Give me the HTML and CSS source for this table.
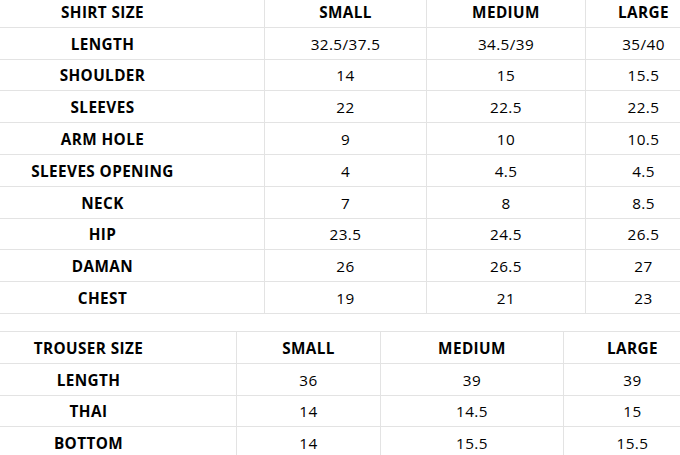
FILE: index.html
```html
<!DOCTYPE html>
<html>
<head>
<meta charset="utf-8">
<link rel="stylesheet" href="styles.css">
</head>
<body>
<div class="wrap">
  <table class="size shirt">
    <colgroup><col class="c1"><col class="c2"><col class="c3"><col class="c4"></colgroup>
    <tr class="head"><td>SHIRT SIZE</td><td>SMALL</td><td>MEDIUM</td><td>LARGE</td></tr>
    <tr><th>LENGTH</th><td>32.5/37.5</td><td>34.5/39</td><td>35/40</td></tr>
    <tr><th>SHOULDER</th><td>14</td><td>15</td><td>15.5</td></tr>
    <tr><th>SLEEVES</th><td>22</td><td>22.5</td><td>22.5</td></tr>
    <tr><th>ARM HOLE</th><td>9</td><td>10</td><td>10.5</td></tr>
    <tr><th>SLEEVES OPENING</th><td>4</td><td>4.5</td><td>4.5</td></tr>
    <tr><th>NECK</th><td>7</td><td>8</td><td>8.5</td></tr>
    <tr><th>HIP</th><td>23.5</td><td>24.5</td><td>26.5</td></tr>
    <tr><th>DAMAN</th><td>26</td><td>26.5</td><td>27</td></tr>
    <tr><th>CHEST</th><td>19</td><td>21</td><td>23</td></tr>
  </table>
  <table class="size trouser">
    <colgroup><col class="c1"><col class="c2"><col class="c3"><col class="c4"></colgroup>
    <tr class="head"><td>TROUSER SIZE</td><td>SMALL</td><td>MEDIUM</td><td>LARGE</td></tr>
    <tr><th>LENGTH</th><td>36</td><td>39</td><td>39</td></tr>
    <tr><th>THAI</th><td>14</td><td>14.5</td><td>15</td></tr>
    <tr><th>BOTTOM</th><td>14</td><td>15.5</td><td>15.5</td></tr>
  </table>
</div>
</body>
</html>
```
FILE: styles.css
```css
html, body {
  margin: 0;
  padding: 0;
  background: #fff;
  overflow: hidden;
}
.wrap {
  margin-top: -5px;
  margin-left: -60px;
  width: 761px;
}
.size {
  width: 761px;
  border-collapse: collapse;
  table-layout: fixed;
  font-family: "Open Sans", "DejaVu Sans", sans-serif;
  font-size: 15.3px;
  color: #000;
}
.size td, .size th {
  border: 1px solid #e3e3e3;
  height: 29.8px;
  padding: 1px 0 0;
  text-align: center;
  vertical-align: middle;
  letter-spacing: 0.4px;
}
.size td { font-weight: 400; }
.size th, .size .head td { font-weight: 700; }
.trouser { margin-top: 17px; }
.shirt .c1 { width: 324px; }
.shirt .c2 { width: 162px; }
.shirt .c3 { width: 159px; }
.shirt .c4 { width: 116px; }
.trouser .c1 { width: 296px; }
.trouser .c2 { width: 144px; }
.trouser .c3 { width: 183px; }
.trouser .c4 { width: 138px; }
```
